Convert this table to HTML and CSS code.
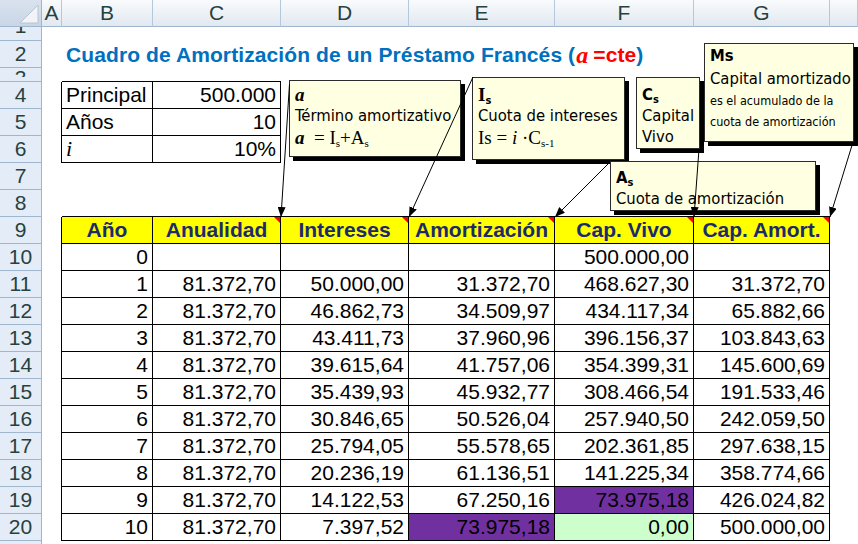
FILE: index.html
```html
<!DOCTYPE html>
<html lang="es">
<head>
<meta charset="utf-8">
<title>Cuadro de Amortización</title>
<link rel="stylesheet" href="styles.css">
</head>
<body>
<div class="page">
  <div class="sheet">
    <div class="ch corner"><svg class="corner-tri" width="41" height="26" viewBox="0 0 41 26"><polygon points="38,5 38,23 20,23" fill="#f1f3f6" stroke="#b9c4d1" stroke-width="1"/></svg></div>
    <div class="ch">A</div><div class="ch">B</div><div class="ch">C</div><div class="ch">D</div><div class="ch">E</div><div class="ch">F</div><div class="ch">G</div><div class="ch"></div>

    <div class="rh up"><span>1</span></div><div class="span-all"></div>

    <div class="rh"><span>2</span></div><div></div>
    <div class="title">Cuadro de Amortización de un Préstamo Francés (<span class="ta">a</span><span class="tr">=cte</span>)</div>

    <div class="rh down"><span>3</span></div><div></div><div class="tt"></div><div class="tt"></div><div class="span-rest"></div>

    <div class="rh"><span>4</span></div><div class="tl"></div><div class="t lab">Principal</div><div class="t">500.000</div><div class="span-rest"></div>
    <div class="rh"><span>5</span></div><div class="tl"></div><div class="t lab">Años</div><div class="t">10</div><div class="span-rest"></div>
    <div class="rh"><span>6</span></div><div class="tl"></div><div class="t lab"><span class="it">i</span></div><div class="t">10%</div><div class="span-rest"></div>

    <div class="rh"><span>7</span></div><div class="span-all"></div>

    <div class="rh"><span>8</span></div><div></div><div class="tt"></div><div class="tt"></div><div class="tt"></div><div class="tt"></div><div class="tt"></div><div class="tt"></div><div></div>

    <div class="rh"><span>9</span></div><div class="tl"></div>
    <div class="t hd">Año</div><div class="t hd cm">Anualidad</div><div class="t hd cm">Intereses</div><div class="t hd cm">Amortización</div><div class="t hd cm">Cap. Vivo</div><div class="t hd cm">Cap. Amort.</div><div></div>

    <div class="rh"><span>10</span></div><div class="tl"></div><div class="t">0</div><div class="t"></div><div class="t"></div><div class="t"></div><div class="t">500.000,00</div><div class="t"></div><div></div>
    <div class="rh"><span>11</span></div><div class="tl"></div><div class="t">1</div><div class="t">81.372,70</div><div class="t">50.000,00</div><div class="t">31.372,70</div><div class="t">468.627,30</div><div class="t">31.372,70</div><div></div>
    <div class="rh"><span>12</span></div><div class="tl"></div><div class="t">2</div><div class="t">81.372,70</div><div class="t">46.862,73</div><div class="t">34.509,97</div><div class="t">434.117,34</div><div class="t">65.882,66</div><div></div>
    <div class="rh"><span>13</span></div><div class="tl"></div><div class="t">3</div><div class="t">81.372,70</div><div class="t">43.411,73</div><div class="t">37.960,96</div><div class="t">396.156,37</div><div class="t">103.843,63</div><div></div>
    <div class="rh"><span>14</span></div><div class="tl"></div><div class="t">4</div><div class="t">81.372,70</div><div class="t">39.615,64</div><div class="t">41.757,06</div><div class="t">354.399,31</div><div class="t">145.600,69</div><div></div>
    <div class="rh"><span>15</span></div><div class="tl"></div><div class="t">5</div><div class="t">81.372,70</div><div class="t">35.439,93</div><div class="t">45.932,77</div><div class="t">308.466,54</div><div class="t">191.533,46</div><div></div>
    <div class="rh"><span>16</span></div><div class="tl"></div><div class="t">6</div><div class="t">81.372,70</div><div class="t">30.846,65</div><div class="t">50.526,04</div><div class="t">257.940,50</div><div class="t">242.059,50</div><div></div>
    <div class="rh"><span>17</span></div><div class="tl"></div><div class="t">7</div><div class="t">81.372,70</div><div class="t">25.794,05</div><div class="t">55.578,65</div><div class="t">202.361,85</div><div class="t">297.638,15</div><div></div>
    <div class="rh"><span>18</span></div><div class="tl"></div><div class="t">8</div><div class="t">81.372,70</div><div class="t">20.236,19</div><div class="t">61.136,51</div><div class="t">141.225,34</div><div class="t">358.774,66</div><div></div>
    <div class="rh"><span>19</span></div><div class="tl"></div><div class="t">9</div><div class="t">81.372,70</div><div class="t">14.122,53</div><div class="t">67.250,16</div><div class="t pu">73.975,18</div><div class="t">426.024,82</div><div></div>
    <div class="rh"><span>20</span></div><div class="tl"></div><div class="t">10</div><div class="t">81.372,70</div><div class="t">7.397,52</div><div class="t pu">73.975,18</div><div class="t gr">0,00</div><div class="t">500.000,00</div><div></div>

    <div class="rh"></div><div class="span-all"></div>
  </div>

  <div class="note n-a">
    <div class="ln"><b class="f fi">a</b></div>
    <div class="ln">Término amortizativo</div>
    <div class="ln f"><b class="fi">a</b>&nbsp; = I<sub>s</sub>+A<sub>s</sub></div>
  </div>

  <div class="note n-is">
    <div class="ln"><b class="f">I</b><sub class="bs">s</sub></div>
    <div class="ln">Cuota de intereses</div>
    <div class="ln f">Is = <i>i</i> ·C<sub>s-1</sub></div>
  </div>

  <div class="note n-cs">
    <div class="ln"><b>C</b><sub class="bs">s</sub></div>
    <div class="ln">Capital</div>
    <div class="ln">Vivo</div>
  </div>

  <div class="note n-ms">
    <div class="ln l1"><b>Ms</b></div>
    <div class="ln l2">Capital amortizado</div>
    <div class="ln sm">es el acumulado de la</div>
    <div class="ln sm">cuota de amortización</div>
  </div>

  <div class="note n-as">
    <div class="ln"><b>A</b><sub class="bs">s</sub></div>
    <div class="ln">Cuota de amortización</div>
  </div>

  <svg class="arrows" width="858" height="544" viewBox="0 0 858 544">
    <defs>
      <marker id="ah" markerUnits="userSpaceOnUse" markerWidth="10" markerHeight="8" refX="10" refY="4" orient="auto">
        <path d="M0,0 L10,4 L0,8 z" fill="#000"/>
      </marker>
    </defs>
    <g stroke="#000" stroke-width="1" fill="none">
      <line x1="289.5" y1="84" x2="281" y2="217" marker-end="url(#ah)"/>
      <line x1="473" y1="77" x2="409" y2="217" marker-end="url(#ah)"/>
      <line x1="608" y1="164" x2="555" y2="217" marker-end="url(#ah)"/>
      <line x1="699" y1="149" x2="694" y2="217" marker-end="url(#ah)"/>
      <line x1="853" y1="142" x2="830" y2="217" marker-end="url(#ah)"/>
    </g>
  </svg>
</div>
</body>
</html>
```

FILE: styles.css
```css
body {
  margin: 0;
  background: #fff;
  font-family: "Liberation Sans", Arial, sans-serif;
  color: #000;
}

.page {
  position: relative;
  width: 858px;
  height: 544px;
  overflow: hidden;
}

.sheet {
  display: grid;
  grid-template-columns: 42px 20px 91px 128px 128px 146px 139px 136px 28px;
  grid-template-rows: 27px 14px 27px 14px repeat(17, 27px) 20px;
}

.sheet > div {
  box-sizing: border-box;
  overflow: hidden;
  white-space: nowrap;
  display: flex;
  align-items: flex-end;
  font-size: 21px;
  line-height: 24px;
}

.span-all { grid-column: 2 / 10; }
.span-rest { grid-column: 5 / 10; }

/* column headers */
.sheet > .ch {
  background: linear-gradient(#f9fbfd, #e1e8f0);
  border-right: 1px solid #b5c7db;
  border-bottom: 1px solid #9eb6ce;
  justify-content: center;
  align-items: center;
  color: #27413e;
  line-height: 26px;
}

.sheet > .corner {
  background: linear-gradient(#d9e3ef, #c9d6e6);
  border-right: 1px solid #9eb6ce;
  position: relative;
}

.corner-tri {
  position: absolute;
  left: 0;
  top: 0;
}

/* row headers */
.sheet > .rh {
  background: #e4ecf7;
  border-right: 1px solid #9eb6ce;
  border-bottom: 1px solid #9eb6ce;
  justify-content: center;
  align-items: center;
  color: #27413e;
}

.sheet > .rh.up,
.sheet > .rh.down {
  align-items: flex-start;
}

.rh.up span {
  display: block;
  margin-top: -13px;
}

.rh.down span {
  display: block;
  height: 8px;
  overflow: hidden;
  line-height: 17px;
  margin-top: 1px;
}

/* title */
.sheet > .title {
  grid-column: 3 / 10;
  color: #0070c0;
  font-weight: bold;
  padding-left: 4px;
  padding-bottom: 1px;
  letter-spacing: 0.1px;
}

.ta {
  font-family: "Liberation Serif", "Times New Roman", serif;
  font-style: italic;
  font-size: 24px;
  color: #ff0000;
  margin-left: 1px;
  margin-right: 5px;
}

.tr {
  color: #ff0000;
}

/* table cells */
.sheet > .t {
  border-right: 1px solid #000;
  border-bottom: 1px solid #000;
  justify-content: flex-end;
  padding: 0 4px 1px 4px;
}

.sheet > .tl {
  border-right: 1px solid #000;
}

.sheet > .tt {
  border-bottom: 1px solid #000;
}

.sheet > .lab {
  justify-content: flex-start;
}

.it {
  font-family: "Liberation Serif", "Times New Roman", serif;
  font-style: italic;
  font-size: 22px;
}

.sheet > .hd {
  background: #ffff00;
  font-weight: bold;
  color: #1b2a6e;
  justify-content: center;
}

.sheet > .pu { background: #7030a0; }
.sheet > .gr { background: #ccffcc; }

.sheet > .cm { position: relative; }

.cm::after {
  content: "";
  position: absolute;
  top: 0;
  right: 0;
  border-top: 6px solid #ff0000;
  border-left: 6px solid transparent;
}

/* comment notes */
.note {
  position: absolute;
  box-sizing: border-box;
  background: #ffffe1;
  border: 1px solid #2b2b2b;
  box-shadow: 4px 4px 0 #000;
  font-family: "DejaVu Sans Condensed", "DejaVu Sans", sans-serif;
  font-stretch: condensed;
  font-size: 16.5px;
  line-height: 21px;
  padding: 3px 4px 0 5px;
  white-space: nowrap;
  overflow: hidden;
  color: #000;
}

.note .ln { height: 21px; }

.note sub {
  font-size: 11px;
  line-height: 0;
  vertical-align: -3px;
}

.note sub.bs { font-weight: bold; }

.f {
  font-family: "Liberation Serif", "Times New Roman", serif;
  font-size: 19px;
}

.fi {
  font-family: "Liberation Serif", "Times New Roman", serif;
  font-style: italic;
  font-weight: bold;
  font-size: 19px;
}

.note .ln.f { height: 23px; line-height: 23px; }

.n-a { left: 289px; top: 80px; width: 172px; height: 77px; }
.n-is { left: 472px; top: 77px; width: 153px; height: 83px; padding-top: 6px; }
.n-cs { left: 636px; top: 77px; width: 64px; height: 72px; padding-top: 6px; }
.n-ms { left: 704px; top: 43px; width: 150px; height: 99px; padding-top: 1px; }
.n-as { left: 610px; top: 161px; width: 206px; height: 50px; padding-top: 5px; }

.n-ms .l1 { height: 22px; line-height: 22px; }
.n-ms .l2 { height: 23px; line-height: 23px; }
.n-ms .sm { font-size: 12.5px; }

.arrows {
  position: absolute;
  left: 0;
  top: 0;
  pointer-events: none;
}
```
